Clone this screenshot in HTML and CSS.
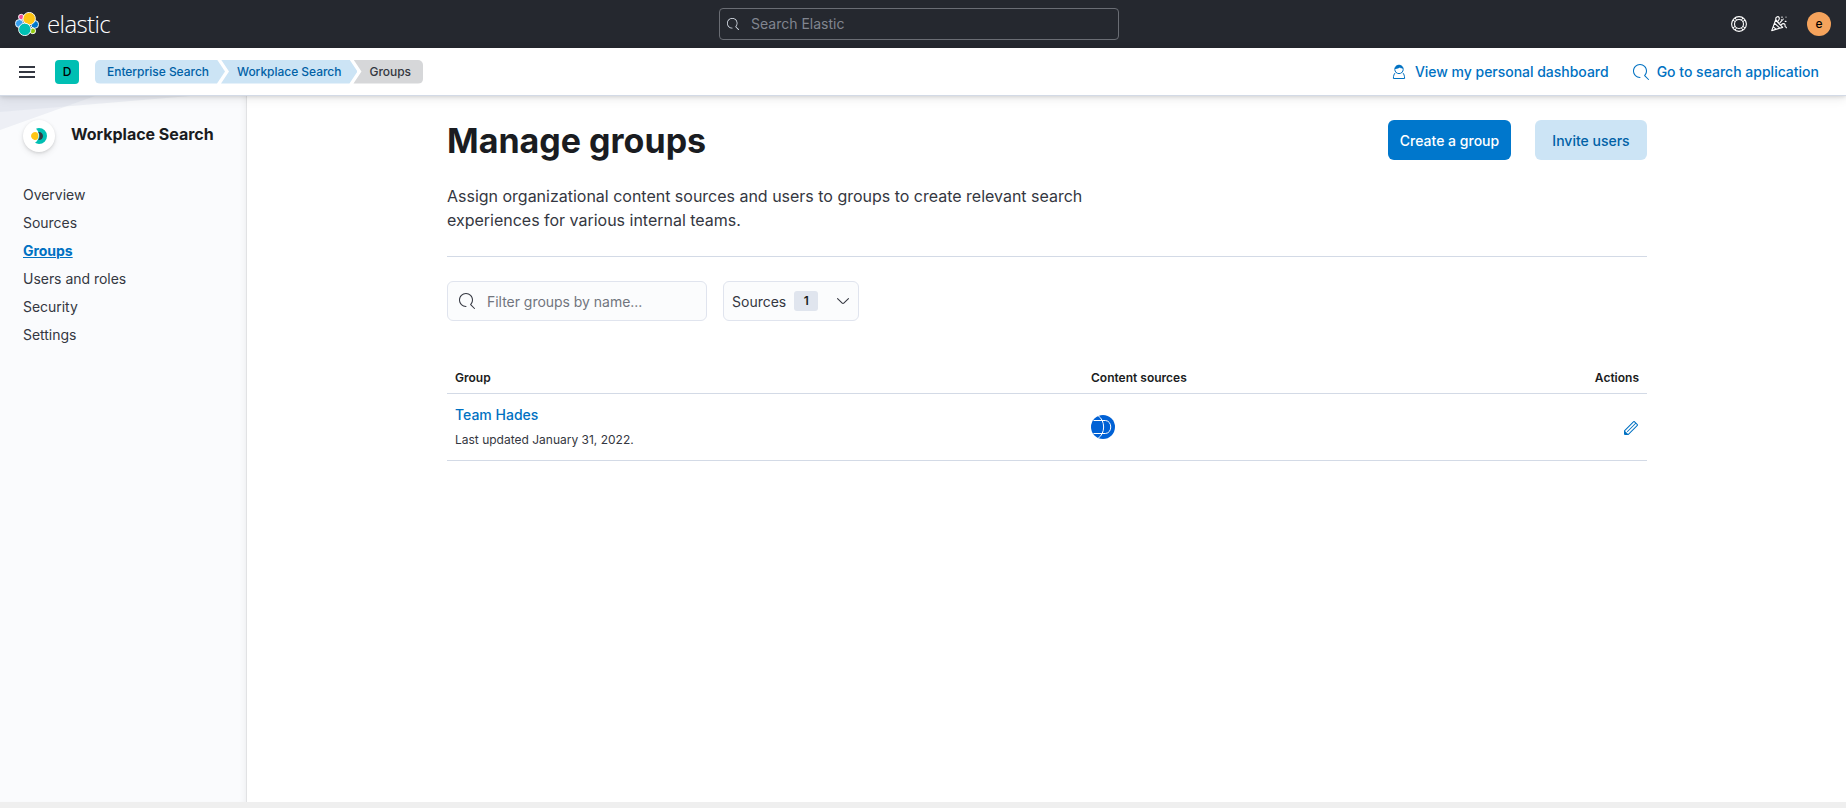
FILE: index.html
```html
<!DOCTYPE html>
<html lang="en">
<head>
<meta charset="utf-8">
<title>Manage groups - Workplace Search</title>
<link rel="stylesheet" href="styles.css">
</head>
<body>
<svg class="defs" width="0" height="0">
  <symbol id="search" viewBox="0 0 16 16"><path d="M11.271 11.978l3.872 3.873a.502.502 0 00.708 0 .502.502 0 000-.708l-3.565-3.564c2.38-2.747 2.267-6.923-.342-9.532-2.73-2.73-7.17-2.73-9.898 0-2.728 2.729-2.728 7.17 0 9.9a6.955 6.955 0 004.949 2.05.5.5 0 000-1 5.96 5.96 0 01-4.242-1.757 6.01 6.01 0 010-8.486 6.004 6.004 0 018.484 0 6.01 6.01 0 010 8.486.5.5 0 00.034.738z"/></symbol>
</svg>
<header class="topbar">
  <a class="brand">
    <svg width="24" height="24" viewBox="0 0 24 24" stroke="#fff" stroke-width=".9">
      <circle cx="6.2" cy="5" r="2.7" fill="#f04e98"/>
      <circle cx="4.4" cy="11.5" r="4" fill="#36a0f0"/>
      <circle cx="19.7" cy="12.4" r="3.9" fill="#0077cc"/>
      <circle cx="17.8" cy="18.9" r="2.8" fill="#93c90e"/>
      <circle cx="14.2" cy="6.6" r="6.2" fill="#fec514"/>
      <circle cx="9.8" cy="17.4" r="6.2" fill="#00bfb3"/>
    </svg>
    <span class="wordmark">elastic</span>
  </a>
  <div class="global-search"><svg width="12" height="12"><use href="#search"/></svg><span>Search Elastic</span></div>
  <div class="top-actions">
    <svg width="16" height="16" viewBox="0 0 16 16" fill="none" stroke="#fff">
      <circle cx="8" cy="8" r="7.4" stroke-width="1.1"/><circle cx="8" cy="8" r="4.5" stroke-width="1.1"/>
      <path d="M4.200 1.900l1.500 2.500M1.900 4.200l2.500 1.500M11.800 1.900l-1.500 2.500M14.100 4.200l-2.500 1.500M4.200 14.100l1.500-2.500M1.900 11.800l2.500-1.500M11.800 14.100l-1.500-2.500M14.100 11.800l-2.500-1.500"/>
    </svg>
    <svg width="16" height="16" viewBox="0 0 16 16" fill="none" stroke="#fff" stroke-width="1.100" stroke-linecap="round" stroke-linejoin="round">
      <path d="M4.7 3.7L.7 14.6l11-3.2zM3.7 7.3l5.1 4.8M2.4 10.8l2.8 2.6M4.6 4.2l6.9 7"/>
      <path d="M4.9 3.2C4.2 1 7.1-.2 8.1 1.6c.6 1.2-.2 2.4-1 3.3M9 6.7l2.5-2.8M10.3 8.6c1.4-1.4 3-1.2 3.6-.2.5.9-.3 2 .5 2.5.5.3 1 .2 1 .9"/>
      <path d="M11 .9v.5M12.4 3v.1M15 1v.1M14.2 5.4h.8M10.4 3.7h.1"/>
    </svg>
    <span class="avatar">e</span>
  </div>
</header>
<div class="subbar">
  <svg class="menu" width="16" height="12" fill="#343741"><path d="M0 0h16v2H0zM0 5h16v2H0zM0 10h16v2H0z"/></svg>
  <span class="space">D</span>
  <nav class="crumbs">
    <a class="crumb first">Enterprise Search</a><a class="crumb">Workplace Search</a><span class="crumb last">Groups</span>
  </nav>
  <div class="links">
    <a class="link dash"><svg width="16" height="16" viewBox="0 0 16 16" fill="none" stroke="#0071c2"><circle cx="8" cy="5.4" r="4.2"/><path d="M3.8 4.9C4 2.4 5.8 1 8 1s3.9 1.300 4.200 3.400C10.500 4.800 9.500 4.300 9 3.600 7.500 4.800 5.500 5.100 3.800 4.900z" fill="#0071c2" stroke="none"/><path d="M4.300 8.800C3 9.800 2.400 12 2.400 14.500h11.200c0-2.500-.600-4.700-1.900-5.700"/></svg>View my personal dashboard</a>
    <a class="link"><svg width="16" height="16"><use href="#search"/></svg>Go to search application</a>
  </div>
</div>
<div class="layout">
  <aside class="sidebar">
    <svg class="rays" width="200" height="34" viewBox="0 0 200 34" fill="#d3dae6"><path d="M0 0H95L0 34z" fill-opacity=".35"/><path d="M0 0H190L0 16z" fill-opacity=".35"/></svg>
    <div class="product">
      <span class="product-icon"><svg width="16" height="16" viewBox="0 0 16 16"><path d="M5 .8A8 8 0 0 1 8 0a8 8 0 0 1 0 16 8 8 0 0 1-4-1.200C9 12 9 4 5 .8z" fill="#00bfb3"/><path d="M7.300 4C10 3.600 12 5.500 12 8s-2 4.400-4.700 4C9 9.500 9 6.500 7.300 4z" fill="#343741"/><path d="M4 4c1 0 1.900.300 2.500.8 1 2 1 4.400 0 6.400A4 4 0 1 1 4 4z" fill="#fec514"/></svg></span>
      <h2>Workplace Search</h2>
    </div>
    <nav class="nav">
      <a>Overview</a><a>Sources</a><a class="active">Groups</a><a>Users and roles</a><a>Security</a><a>Settings</a>
    </nav>
  </aside>
  <main class="main">
    <div class="content">
      <div class="page-head">
        <div><h1>Manage groups</h1></div>
        <div class="buttons"><button class="btn primary">Create a group</button><button class="btn">Invite users</button></div>
      </div>
      <p class="lead">Assign organizational content sources and users to groups to create relevant search<br>experiences for various internal teams.</p>
      <div class="filters">
        <div class="field"><svg width="16" height="16"><use href="#search"/></svg><span>Filter groups by name...</span></div>
        <div class="select"><span>Sources</span><b>1</b><svg width="16" height="16" viewBox="0 0 16 16" fill="#343741"><path d="M13.069 5.157L8.384 9.768a.546.546 0 01-.768 0L2.930 5.158a.552.552 0 00-.771 0 .530.530 0 000 .759l4.684 4.610c.641.631 1.672.630 2.312 0l4.684-4.610a.530.530 0 000-.760.552.552 0 00-.771 0z"/></svg></div>
      </div>
      <div class="table">
        <div class="row head"><span>Group</span><span>Content sources</span><span class="end">Actions</span></div>
        <div class="row body">
          <div class="group"><a class="team">Team Hades</a><p class="updated">Last updated January 31, 2022.</p></div>
          <svg width="24" height="24" viewBox="0 0 24 24" fill="none" stroke="#fff"><circle cx="12" cy="12" r="12" fill="#0061d5" stroke="none"/><path d="M7 .6C14.500 5.500 14.500 18.500 7 23.400M2.500 5.500h12c7 .5 7 12.500 0 13h-12"/></svg>
          <svg class="pencil" width="16" height="16" viewBox="0 0 16 16" fill="#0071c2"><path d="M12.148 3.148L11 2l-9 9v3h3l9-9-1.144-1.144-8.002 7.998a.502.502 0 01-.708 0 .502.502 0 010-.708l8.002-7.998zM11 1c.256 0 .512.098.707.293l3 3a.999.999 0 010 1.414l-9 9A.997.997 0 015 15H2a1 1 0 01-1-1v-3c0-.265.105-.520.293-.707l9-9A.997.997 0 0111 1z"/><path d="M2 11v3h3z"/></svg>
        </div>
      </div>
    </div>
  </main>
</div>
<div class="footer-strip"></div>
</body>
</html>
```
FILE: styles.css
```css
* { box-sizing: border-box; }
body {
  margin: 0; height: 808px; display: flex; flex-direction: column; overflow: hidden;
  font: 400 14px/24px Inter, sans-serif; color: #343741; background: #fff;
}
h1, h2, p { margin: 0; }
svg { display: block; flex: none; }
.defs { position: absolute; }
.topbar { height: 48px; flex: none; background: #25282f; display: grid; grid-template-columns: 696px 400px 1fr; align-items: center; padding: 0 15px; gap: 8px; }
.brand { display: flex; align-items: center; gap: 8px; color: #fff; }
.wordmark { font: 400 24px/24px "Open Sans", sans-serif; font-weight: 350; letter-spacing: -.6px; }
.global-search { height: 32px; width: 400px; border: 1px solid #6a6d74; border-radius: 4px; display: flex; align-items: center; padding-left: 7px; gap: 12px; color: #81858f; fill: #dfe5ef; }
.top-actions { display: flex; justify-content: flex-end; align-items: center; gap: 24px; }
.avatar { width: 24px; height: 24px; margin-left: -4px; border-radius: 50%; background: #f5a35c; color: #000; text-align: center; font-size: 12px; font-weight: 500; }
.subbar { height: 48px; flex: none; position: relative; display: flex; align-items: center; padding: 0 27px 0 19px; background: #fff; border-bottom: 1px solid #d3dae6; box-shadow: 0 1px 4px rgba(0,0,0,.12), 0 3px 10px rgba(0,0,0,.08); z-index: 2; }
.space { width: 24px; height: 24px; margin-left: 20px; border-radius: 4px; background: #00bfb3; color: #000; text-align: center; font-size: 12px; font-weight: 500; }
.crumbs { display: flex; margin-left: 16px; font-size: 12px; font-weight: 500; letter-spacing: -.03px; }
.crumb { height: 24px; padding: 0 16px; margin-right: -4px; background: #cce4f5; color: #0061a6; clip-path: polygon(0 0, calc(100% - 8px) 0, 100% 50%, calc(100% - 8px) 100%, 0 100%, 8px 50%); }
.crumb.first { padding-left: 12px; border-radius: 5px 0 0 5px; clip-path: polygon(0 0, calc(100% - 8px) 0, 100% 50%, calc(100% - 8px) 100%, 0 100%); }
.crumb.last { padding-right: 12px; background: #d6d7d9; color: #343741; border-radius: 0 5px 5px 0; clip-path: polygon(0 0, 100% 0, 100% 100%, 0 100%, 8px 50%); }
.links { display: flex; margin-left: auto; gap: 24px; color: #0071c2; fill: #0071c2; font-weight: 500; }
.link { display: flex; align-items: center; gap: 8px; }
.link.dash { letter-spacing: -.02px; }
.layout { flex: 1; display: flex; min-height: 0; }
.sidebar { width: 247px; position: relative; padding: 24px 23px; background: #fafbfd; box-shadow: inset -6px 0 6px -4px rgba(0,0,0,.06), inset -1px 0 #ebecee; }
.rays { position: absolute; left: 0; top: 0; }
.product { position: relative; display: flex; gap: 16px; }
.product-icon { width: 32px; height: 32px; border-radius: 50%; background: #fff; display: grid; place-items: center; box-shadow: 0 1px 3px rgba(0,0,0,.12), 0 3px 6px rgba(0,0,0,.08); }
.product h2 { font-size: 16px; line-height: 21px; font-weight: 700; color: #1a1c21; padding-top: 4px; letter-spacing: -.03px; }
.nav { display: flex; flex-direction: column; margin-top: 29px; letter-spacing: -.03px; }
.nav a { height: 28px; line-height: 28px; }
.nav .active { color: #0071c2; font-weight: 700; text-decoration: underline; }
.main { flex: 1; padding: 24px 0 0 200px; }
.content { width: 1200px; }
.page-head { display: flex; justify-content: space-between; }
h1 { font-size: 34px; line-height: 42px; height: 40px; font-weight: 700; color: #1a1c21; }
.buttons { display: flex; gap: 24px; }
.btn { height: 40px; width: 112px; border: 0; border-radius: 6px; background: #cce4f5; color: #0061a6; font: 500 14px/40px Inter, sans-serif; padding: 1px 0 0; }
.primary { background: #0077cc; color: #fff; width: 123px; }
.lead { margin-top: 24px; padding-bottom: 23px; font-size: 16px; border-bottom: 1px solid #d3dae6; height: 73px; letter-spacing: -.01px; }
.filters { display: flex; gap: 16px; margin-top: 24px; }
.field, .select { height: 40px; border: 1px solid #e0e4ee; border-radius: 6px; background: #fbfcfd; display: flex; align-items: center; }
.field { width: 260px; padding-left: 11px; gap: 12px; color: #71757e; fill: #343741; }
.field span, .select span { padding-top: 2px; }
.field span { letter-spacing: -.03px; }
.select { width: 136px; padding: 0 7px 0 8px; }
.select b { width: 24px; height: 20px; line-height: 20px; margin: 0 auto 0 8px; border-radius: 3px; background: #e0e5ee; font-size: 12px; font-weight: 600; text-align: center; color: #1a1c21; }
.table { margin-top: 40px; }
.row { display: grid; grid-template-columns: 636px 1fr auto; align-items: center; padding: 0 8px; border-bottom: 1px solid #d3dae6; }
.head { height: 33px; padding-top: 2px; font-size: 12px; font-weight: 600; color: #1a1c21; }
.body { height: 67px; }
.group { padding-bottom: 2px; }
.team { display: block; color: #0071c2; font-weight: 500; line-height: 24px; }
.updated { font-size: 12px; line-height: 18px; margin-top: 4px; }
.pencil { margin-top: 2px; }
.footer-strip { height: 6px; flex: none; background: #efefef; }
```
